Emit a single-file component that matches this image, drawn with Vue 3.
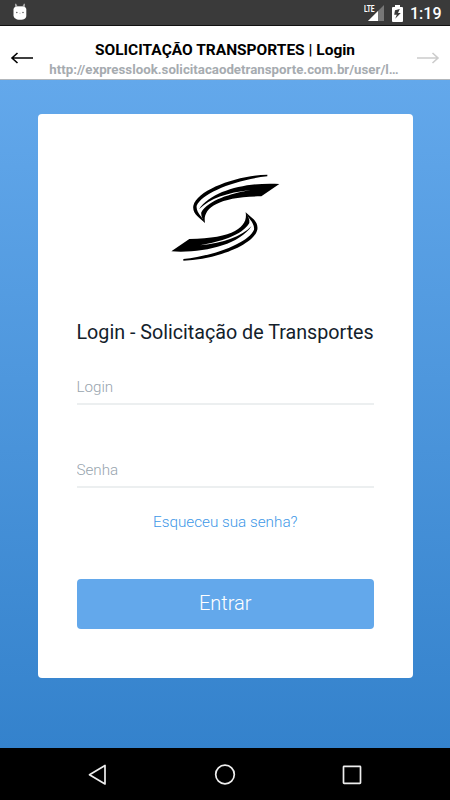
<template>
  <div class="screen">
    <div class="status-bar">
      <svg class="cat" width="16" height="20" viewBox="0 0 16 20">
        <path d="M3 3L4 2.5 5.4 5H10.6L12 2.5 13 3 12.8 7H3.2Z" fill="#aaa" />
        <path d="M1.5 8Q1.8 6 4 5.8H12Q14 6 14.3 8V15Q14 17.8 11 18.4Q8 19 5 18.4Q2 17.8 1.5 15Z" fill="#fff" />
        <circle cx="4.8" cy="11.5" r=".75" fill="#555" />
        <circle cx="11" cy="11.5" r=".75" fill="#555" />
        <path d="M7 12.3H9" stroke="#ccc" stroke-width=".7" />
      </svg>
      <div class="status-right">
        <div class="signal">
          <span class="lte">LTE</span>
          <svg width="16" height="16" viewBox="0 0 16 16">
            <path d="M16 0V16H0Z" fill="#777" />
            <path d="M10 6V16H0Z" fill="#fff" />
          </svg>
        </div>
        <svg class="battery" width="11" height="17" viewBox="0 0 11 17">
          <path d="M3 0H8V2H10Q11 2 11 3V16Q11 17 10 17H1Q0 17 0 16V3Q0 2 1 2H3Z" fill="#fff" />
          <path d="M7.8 4L3 5.2 2.2 9.8H4.8L3.2 13.8 8.8 8H6Z" fill="#3a3a3a" />
        </svg>
        <span class="clock">1:19</span>
      </div>
    </div>

    <header class="nav-bar">
      <button class="arrow">
        <svg width="24" height="14" viewBox="0 0 24 14">
          <path d="M23 7H2M7.5 2L2 7L7.5 12" />
        </svg>
      </button>
      <div class="heading">
        <div class="title">SOLICITAÇÃO TRANSPORTES | Login</div>
        <div class="url">http://expresslook.solicitacaodetransporte.com.br/user/l…</div>
      </div>
      <button class="arrow forward" disabled>
        <svg width="24" height="14" viewBox="0 0 24 14">
          <path d="M1 7H22M16.5 2L22 7L16.5 12" />
        </svg>
      </button>
    </header>

    <main class="content">
      <form class="card" @submit.prevent>
        <svg class="logo" width="130" height="105" viewBox="0 0 390 315">
          <defs>
            <g id="wing">
              <path d="M322 29C232 31 112 74 100 122C96 148 119 158 135 174C130 157 107 143 110 122C125 85 224 44 322 34Z" />
              <path d="M358 57C265 51 156 75 117 133C150 100 200 83 272 75C212 86 145 105 124 142C122 152 128 163 135 174C127 130 172 95 304 94Z" />
            </g>
          </defs>
          <use href="#wing" />
          <use href="#wing" transform="rotate(180 196 158)" />
        </svg>
        <h1>Login - Solicitação de Transportes</h1>
        <input v-model="login" class="field" type="text" placeholder="Login" />
        <input v-model="password" class="field password" type="password" placeholder="Senha" />
        <a class="forgot" href="#" @click.prevent>Esqueceu sua senha?</a>
        <button class="submit" type="submit">Entrar</button>
      </form>
    </main>

    <nav class="system-nav">
      <svg width="22" height="22" viewBox="0 0 22 22"><path d="M18 1.5V20L2.5 10.8Z" /></svg>
      <svg width="22" height="22" viewBox="0 0 22 22"><circle cx="11" cy="10.5" r="9.3" /></svg>
      <svg width="22" height="22" viewBox="0 0 22 22"><rect x="2.5" y="2.4" width="17" height="17" rx=".6" /></svg>
    </nav>
  </div>
</template>

<script setup>
import { ref } from 'vue'

const login = ref('')
const password = ref('')
</script>

<style>
body {
  margin: 0;
}
</style>

<style scoped>
.screen {
  width: 450px;
  height: 800px;
  display: flex;
  flex-direction: column;
  overflow: hidden;
  font-family: Roboto, sans-serif;
  background: #000;
}
.screen * {
  box-sizing: border-box;
}
.status-bar {
  height: 26px;
  flex: none;
  display: flex;
  justify-content: space-between;
  background: #3a3a3a;
  border-bottom: 1px solid #111;
  padding: 0 8px 0 12px;
}
.cat {
  margin-top: 1px;
}
.status-right {
  display: flex;
  color: #fff;
}
.signal {
  position: relative;
  width: 20px;
  height: 22px;
  margin-right: 8px;
}
.signal svg {
  display: block;
  margin: 5px 0 0 4px;
}
.lte {
  position: absolute;
  left: 0;
  top: 4px;
  font-size: 9.5px;
  line-height: 10px;
  font-weight: 700;
  letter-spacing: -0.2px;
  transform: scaleX(0.7);
  transform-origin: left;
}
.battery {
  margin: 5px 7px 0 0;
}
.clock {
  width: 32px;
  font-size: 16px;
  line-height: 28px;
  font-weight: 500;
  white-space: nowrap;
}
.nav-bar {
  height: 54px;
  flex: none;
  display: flex;
  justify-content: space-between;
  background: #fff;
  border-bottom: 1px solid #b3b7bb;
  padding: 0 10px;
}
button {
  font-family: inherit;
  border: none;
}
.arrow {
  width: 24px;
  height: 14px;
  margin-top: 25px;
  padding: 0;
  background: none;
}
.arrow svg {
  display: block;
  fill: none;
  stroke: #000;
  stroke-width: 1.6;
}
.forward svg {
  stroke: #ccc;
}
.heading {
  width: 352px;
  padding-top: 15px;
  text-align: center;
  white-space: nowrap;
}
.title {
  font-size: 15.5px;
  line-height: 19px;
  font-weight: 700;
  color: #000;
}
.url {
  margin-left: -2px;
  font-size: 13.27px;
  line-height: 19px;
  font-weight: 700;
  color: #a6abb0;
}
.content {
  height: 668px;
  flex: none;
  padding: 33.5px 37.5px 0 38px;
  background: linear-gradient(#63a8eb, #3482cc);
}
.card {
  height: 564.5px;
  display: flex;
  flex-direction: column;
  background: #fff;
  border-radius: 4px;
  padding: 0 38.5px;
}
.logo {
  margin: 51.5px 0 0 83.5px;
  flex: none;
}
h1 {
  margin: 50px 0 0;
  font-size: 19.7px;
  line-height: 26px;
  font-weight: 400;
  color: #13212b;
  white-space: nowrap;
}
.field {
  width: 100%;
  height: 36px;
  margin-top: 23px;
  padding: 2px 0 0;
  border: none;
  border-bottom: 2px solid #eceff0;
  border-radius: 0;
  outline: none;
  background: none;
  font-family: inherit;
  font-size: 15.2px;
  font-weight: 300;
}
.field::placeholder {
  color: #97a4ae;
  opacity: 1;
}
.password {
  margin-top: 47px;
}
.forgot {
  margin-top: 24px;
  font-size: 15.25px;
  line-height: 20px;
  font-weight: 300;
  color: #3e98e7;
  text-align: center;
  text-decoration: none;
}
.submit {
  height: 50px;
  flex: none;
  margin-top: 46.5px;
  padding: 0 0 2px;
  border-radius: 4px;
  background: #63a8eb;
  color: #fff;
  font-size: 20px;
  font-weight: 300;
}
.system-nav {
  flex: 1;
  display: flex;
  justify-content: center;
  gap: 105px;
  padding-top: 16px;
  background: #000;
}
.system-nav svg {
  fill: none;
  stroke: #eee;
  stroke-width: 1.7;
  stroke-linejoin: round;
}
</style>
